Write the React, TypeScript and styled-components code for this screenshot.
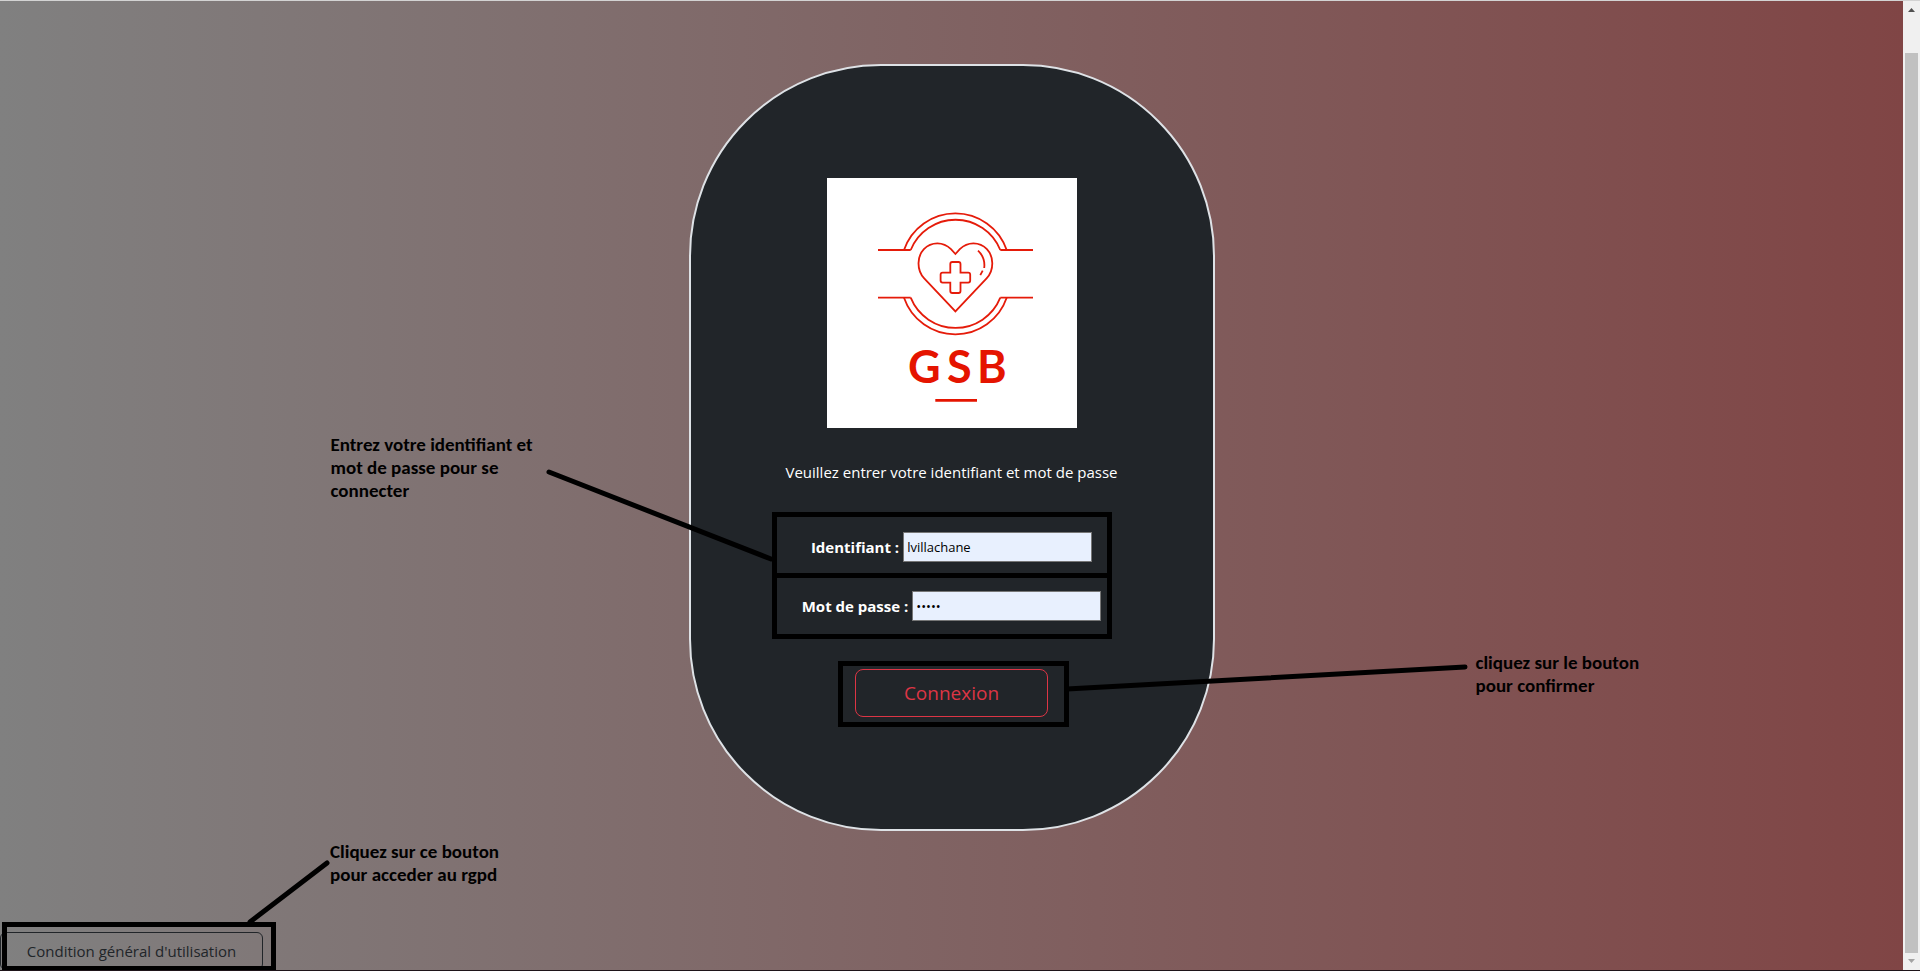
import React from "react";
import styled, { createGlobalStyle } from "styled-components";

const GlobalStyle = createGlobalStyle`
  *, *::before, *::after { box-sizing: border-box; }
  body { margin: 0; }
`;

const uiFont = `"Segoe UI", "Open Sans", "Noto Sans", sans-serif`;

const Page = styled.div`
  display: flex;
  min-height: 100vh;
  border-top: 1px solid #d3d3d3;
  border-bottom: 1px solid #1e1419;
  font-family: ${uiFont};
  font-size: 15px;
  line-height: 24px;
`;

const Content = styled.main`
  flex: 1;
  display: flex;
  flex-direction: column;
  align-items: center;
  padding-top: 63px;
  overflow: hidden;
  background: linear-gradient(to right, #808080, #804545);
`;

const Card = styled.section`
  position: relative;
  width: 526px;
  padding: 112px 40px 102px;
  display: flex;
  flex-direction: column;
  align-items: center;
  background: #212529;
  border: 2px solid #dee2e6;
  border-radius: 192px;
  color: #fff;
`;

const Logo = styled.svg`
  display: block;
  width: 250px;
  height: 250px;
  background: #fff;
`;

const Intro = styled.p`
  margin: 32px 0 28px;
`;

const LoginForm = styled.form`
  display: flex;
  flex-direction: column;
  align-items: center;
`;

const FieldsFrame = styled.div`
  width: 340px;
  margin-right: 20px;
  border: 5px solid #000;
`;

const FieldRow = styled.div`
  display: flex;
  align-items: center;
  justify-content: center;
  gap: 4px;
  padding: 15px 0 11px 20px;

  & + & {
    padding: 13px 0 13px 20px;
    border-top: 5px solid #000;
  }
`;

const FieldLabel = styled.label`
  font-weight: 700;
  white-space: nowrap;
`;

const Field = styled.input`
  width: 189px;
  height: 30px;
  padding: 1px 3px;
  border: 1px solid #767676;
  border-radius: 0;
  background: #e8f0fe;
  color: #000;
  font-family: ${uiFont};
  font-size: 13px;
`;

const SubmitFrame = styled.div`
  margin: 22px 0 0 4px;
  padding: 3px 16px 5px 12px;
  border: 5px solid #000;
`;

const SubmitButton = styled.button`
  display: block;
  width: 193px;
  height: 48px;
  border: 1px solid #dc3545;
  border-radius: 8px;
  background: transparent;
  color: #dc3545;
  font-family: ${uiFont};
  font-size: 19px;
`;

const Note = styled.p<{ $left: number; $top: number; $width: number }>`
  position: absolute;
  left: ${(p) => p.$left}px;
  top: ${(p) => p.$top}px;
  width: ${(p) => p.$width}px;
  margin: 0;
  color: #000;
  font: 700 19px/23px Calibri, Carlito, Lato, sans-serif;
`;

const Pointer = styled.svg<{ $left: number; $top: number }>`
  position: absolute;
  left: ${(p) => p.$left}px;
  top: ${(p) => p.$top}px;
  stroke: #000;
  stroke-width: 5;
  stroke-linecap: round;
`;

const Footer = styled.footer`
  position: relative;
  align-self: stretch;
  margin-top: auto;
`;

const TermsButton = styled.button`
  display: block;
  width: 263px;
  height: 38px;
  border: 1px solid #212529;
  border-radius: 6px;
  background: transparent;
  color: #212529;
  font-family: ${uiFont};
  font-size: 15px;
`;

const TermsFrame = styled.div`
  position: absolute;
  left: 2px;
  bottom: -1px;
  width: 274px;
  height: 49px;
  border: 5px solid #000;
  pointer-events: none;
`;

const ScrollTrack = styled.div`
  width: 17px;
  padding: 0 2px;
  display: flex;
  flex-direction: column;
  align-items: center;
  background: #f0f0f0;
`;

const ScrollArrow = styled.svg`
  display: block;
  width: 13px;
  height: 17px;
`;

const ScrollThumb = styled.div`
  flex: 1;
  align-self: stretch;
  margin-top: 35px;
  background: #c1c1c1;
`;

function GsbLogo() {
  return (
    <Logo viewBox="0 0 250 250" role="img" aria-label="GSB">
      <g fill="none" stroke="#e51b0a" strokeWidth="1.8">
        <path d="M51 72H83.7M173.3 72H206M51 119.7H83.7M173.3 119.7H206" />
        <path d="M77 72A54.3 54.3 0 0 1 179.7 72M83.7 72A48.3 48.3 0 0 1 173.3 72" />
        <path d="M77 119.7A54.3 54.3 0 0 0 179.7 119.7M83.7 119.7A48.3 48.3 0 0 0 173.3 119.7" />
        <path d="M128.4 76L124 71.2C120 67.3 115.5 65.4 110.4 65.4C99.6 65.4 91.5 74.2 91.5 85.3C91.5 91.3 93.6 96.6 97.2 100.4L128.4 133.4L159.6 100.4C163.2 96.6 165.3 91.3 165.3 85.3C165.3 74.2 157.2 65.4 146.4 65.4C141.3 65.4 136.8 67.3 132.8 71.2Z" />
        <path d="M125.3 84H131.5Q133.5 84 133.5 86V94.6H141.2Q143.2 94.6 143.2 96.6V102.6Q143.2 104.6 141.2 104.6H133.5V113Q133.5 115 131.5 115H125.3Q123.3 115 123.3 113V104.6H115.6Q113.6 104.6 113.6 102.6V96.6Q113.6 94.6 115.6 94.6H123.3V86Q123.3 84 125.3 84Z" />
        <path d="M151 72.7Q158.5 79.5 157.2 90M155.7 92.7L153.3 97.2" />
      </g>
      <path d="M108.3 222.3H150" stroke="#e51400" strokeWidth="2.8" />
      <text
        x="81 120 150"
        y="205"
        fill="#e51400"
        fontFamily="Lato, sans-serif"
        fontSize="45"
        fontWeight="700"
      >
        GSB
      </text>
    </Logo>
  );
}

export default function App() {
  return (
    <>
      <GlobalStyle />
      <Page>
        <Content>
          <Card>
            <GsbLogo />
            <Intro>Veuillez entrer votre identifiant et mot de passe</Intro>
            <LoginForm onSubmit={(e) => e.preventDefault()}>
              <FieldsFrame>
                <FieldRow>
                  <FieldLabel htmlFor="login">Identifiant :</FieldLabel>
                  <Field id="login" type="text" defaultValue="lvillachane" />
                </FieldRow>
                <FieldRow>
                  <FieldLabel htmlFor="password">Mot de passe :</FieldLabel>
                  <Field id="password" type="password" defaultValue="abcde" />
                </FieldRow>
              </FieldsFrame>
              <SubmitFrame>
                <SubmitButton type="submit">Connexion</SubmitButton>
              </SubmitFrame>
            </LoginForm>
            <Note $left={-360} $top={367} $width={220}>
              Entrez votre identifiant et mot de passe pour se connecter
            </Note>
            <Pointer $left={-146} $top={402} width="232" height="96">
              <path d="M4 4L226 91" />
            </Pointer>
            <Note $left={785} $top={585} $width={180}>
              cliquez sur le bouton pour confirmer
            </Note>
            <Pointer $left={372} $top={597} width="408" height="34">
              <path d="M4 26L402 4" />
            </Pointer>
          </Card>
          <Footer>
            <TermsButton type="button">Condition général d'utilisation</TermsButton>
            <TermsFrame />
            <Note $left={330} $top={-92} $width={180}>
              Cliquez sur ce bouton pour acceder au rgpd
            </Note>
            <Pointer $left={246} $top={-73} width="86" height="68">
              <path d="M4 63L81 4" />
            </Pointer>
          </Footer>
        </Content>
        <ScrollTrack aria-hidden="true">
          <ScrollArrow viewBox="0 0 13 17">
            <path d="M3 11H10L6.500 7Z" fill="#505050" />
          </ScrollArrow>
          <ScrollThumb />
          <ScrollArrow viewBox="0 0 13 17">
            <path d="M3 6H10L6.500 10Z" fill="#a3a3a3" />
          </ScrollArrow>
        </ScrollTrack>
      </Page>
    </>
  );
}
